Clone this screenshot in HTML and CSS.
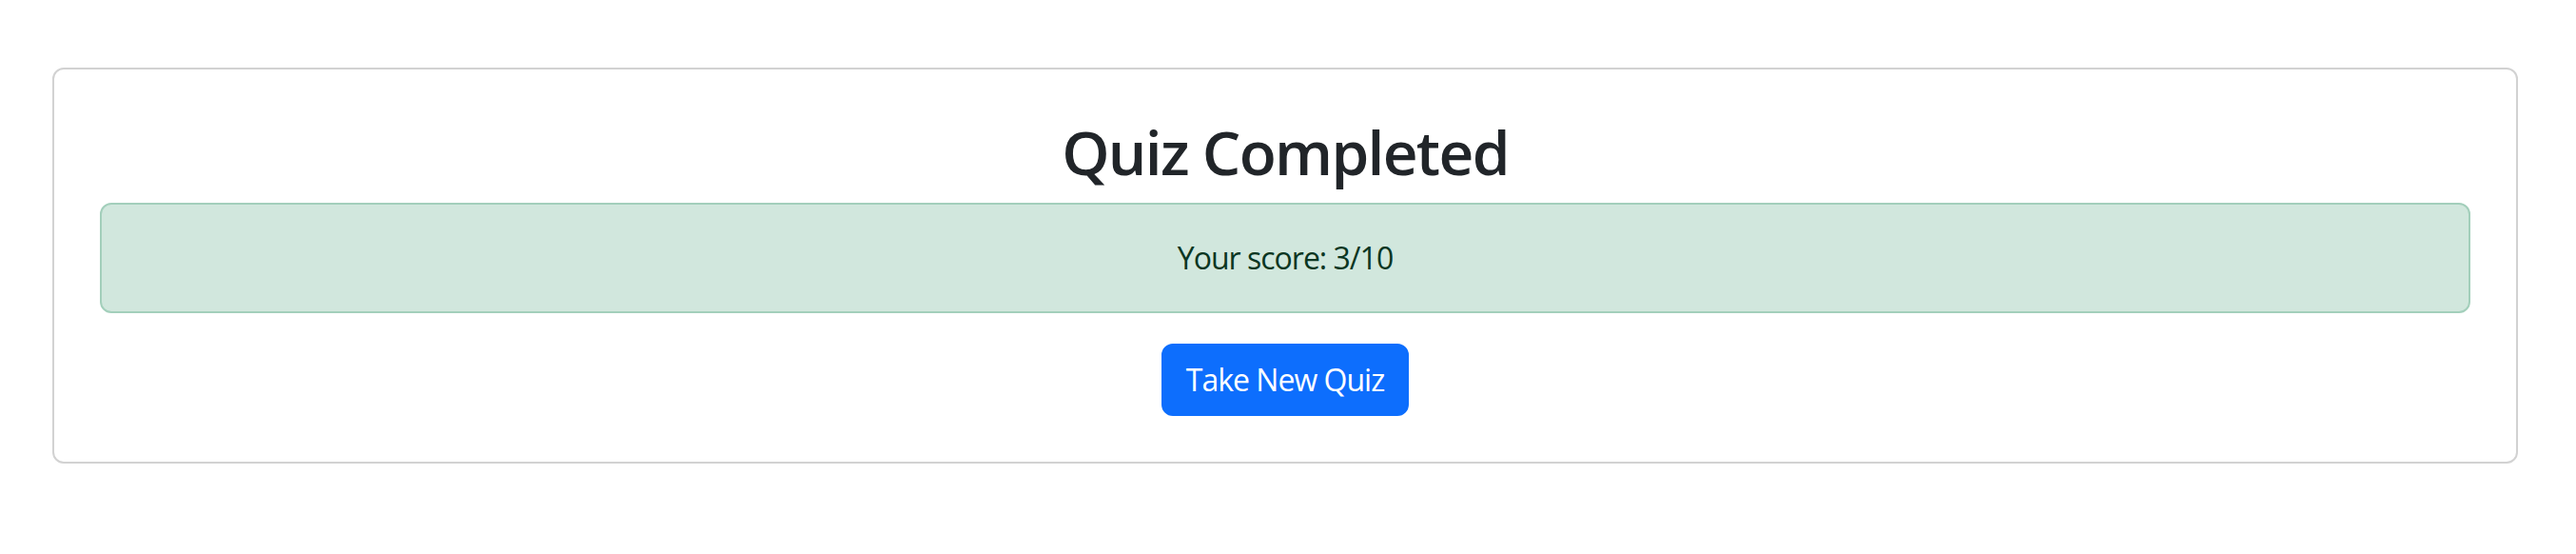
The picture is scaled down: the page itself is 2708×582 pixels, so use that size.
FILE: index.html
```html
<!DOCTYPE html>
<html lang="en">
<head>
<meta charset="utf-8">
<title>Quiz Completed</title>
<link rel="stylesheet" href="styles.css">
</head>
<body>
<div class="page">
  <div class="card">
    <h2 class="title">Quiz Completed</h2>
    <div class="alert">Your score: 3/10</div>
    <div class="actions">
      <button class="btn" type="button">Take New Quiz</button>
    </div>
  </div>
</div>
</body>
</html>
```
FILE: styles.css
```css
html, body {
  margin: 0;
  padding: 0;
  background: #ffffff;
}
body {
  font-family: "Open Sans", "Noto Sans", sans-serif;
  color: #212529;
  font-size: 32px;
  line-height: 48px;
  letter-spacing: -1px;
}
.page {
  padding: 71px 61px 0 55px;
}
.card {
  border: 2px solid #d2d2d2;
  border-radius: 12px;
  padding: 48px;
  text-align: center;
}
.title {
  margin: 0 0 14px;
  font-size: 64px;
  line-height: 78px;
  font-weight: 600;
  letter-spacing: -1.7px;
  color: #212529;
}
.alert {
  background: #d1e7dd;
  border: 2px solid #a3cfbb;
  border-radius: 12px;
  color: #0a3622;
  padding: 32px;
  margin-bottom: 32px;
}
.actions {
  display: flex;
  justify-content: center;
}
.btn {
  font-family: inherit;
  font-size: 32px;
  line-height: 48px;
  letter-spacing: -1px;
  color: #ffffff;
  background: #0d6efd;
  border: 2px solid #0d6efd;
  border-radius: 12px;
  padding: 12px 24px;
}
```
